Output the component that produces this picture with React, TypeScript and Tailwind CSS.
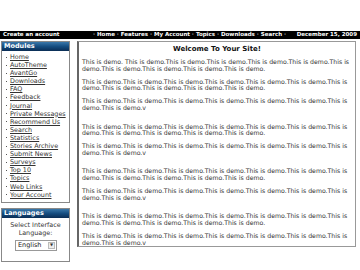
const modules = [
  'Home',
  'AutoTheme',
  'AvantGo',
  'Downloads',
  'FAQ',
  'Feedback',
  'Journal',
  'Private Messages',
  'Recommend Us',
  'Search',
  'Statistics',
  'Stories Archive',
  'Submit News',
  'Surveys',
  'Top 10',
  'Topics',
  'Web Links',
  'Your Account',
]

const nav = ['Home', 'Features', 'My Account', 'Topics', 'Downloads', 'Search']

const full = 'This is demo.This is demo.This is demo.This is demo.This is demo.This is demo.This is demo.This is demo.This is demo.This is demo.This is demo.'
const short = 'This is demo.This is demo.This is demo.This is demo.This is demo.This is demo.This is demo.This is demo.v'

const paras: { text: string; gap?: boolean }[] = [
  { text: 'This is demo. This is demo.This is demo.This is demo.This is demo.This is demo.This is demo.This is demo.This is demo.This is demo.This is demo.' },
  { text: full },
  { text: short, gap: true },
  { text: full },
  { text: short, gap: true },
  { text: full },
  { text: short, gap: true },
  { text: full },
  { text: short },
]

function BoxHead({ title }: { title: string }) {
  return (
    <div className="h-[9px] bg-gradient-to-b from-[#3a78aa] via-[#154d80] to-[#0a2d55] px-[2px] text-[6.5px] leading-[9px] font-bold text-white">
      {title}
    </div>
  )
}

export default function App() {
  return (
    <div className="w-[360px] h-[270px] overflow-hidden bg-white font-['DejaVu_Sans',sans-serif] text-[#222]">
      <div className="h-[31px]" />
      <div className="h-[8px] bg-black flex items-center px-[3px] text-[5.5px] font-bold text-white leading-none">
        <span className="w-[90px]">Create an account</span>
        <span className="flex-1 whitespace-nowrap">
          {nav.map((n) => (
            <span key={n}>
              <span className="text-[#bbb]"> · </span>
              {n}
            </span>
          ))}
          <span className="text-[#bbb]"> ·</span>
        </span>
        <span>December 15, 2009</span>
      </div>

      <div className="flex gap-[7px] pl-[1px] pr-[4px] pt-[2px]">
        <div className="w-[69px] shrink-0 flex flex-col gap-[5px]">
          <div className="border border-[#888] pb-[3px]">
            <BoxHead title="Modules" />
            <ul className="pt-[2px] pl-[3px] text-[6.4px] leading-[8.1px] text-[#333]">
              {modules.map((m) => (
                <li key={m} className="whitespace-nowrap flex items-center">
                  <span className="inline-block w-[1px] h-[1px] bg-[#555] ml-[1px] mr-[3px]" />
                  <a className="underline">{m}</a>
                </li>
              ))}
            </ul>
          </div>
          <div className="border border-[#888] h-[54px]">
            <BoxHead title="Languages" />
            <div className="pt-[3px] text-center text-[6.4px] leading-[8px] text-[#333]">
              <div>Select Interface</div>
              <div>Language:</div>
              <div className="mt-[3px] ml-[13px] w-[42px] h-[11px] border border-[#999] flex items-center justify-between pl-[2px] pr-[1px] bg-white">
                <span className="text-[6.5px] text-[#222]">English</span>
                <span className="w-[7px] h-[7px] border border-[#bbb] bg-[#eee] flex items-center justify-center text-[4px] leading-none">▼</span>
              </div>
            </div>
          </div>
        </div>

        <div className="flex-1 h-[206px] border border-[#999] border-l-[#666] border-l-2 pt-[3px] px-[3px]">
          <div className="text-center text-[7px] font-bold leading-[9px] text-[#111]">Welcome To Your Site!</div>
          <div className="mt-[5px] text-[6.2px] leading-[6.6px] text-[#333]">
            {paras.map((p, i) => (
              <p key={i} className={p.gap ? 'mb-[12px]' : 'mb-[6.5px]'}>
                {p.text}
              </p>
            ))}
          </div>
        </div>
      </div>

      <div className="mt-[19px] h-[10px] bg-black text-center text-[5.5px] font-bold text-white pt-[2px] leading-none">
        Home · Features · My Account · Topics · Downloads · Search
      </div>
    </div>
  )
}
